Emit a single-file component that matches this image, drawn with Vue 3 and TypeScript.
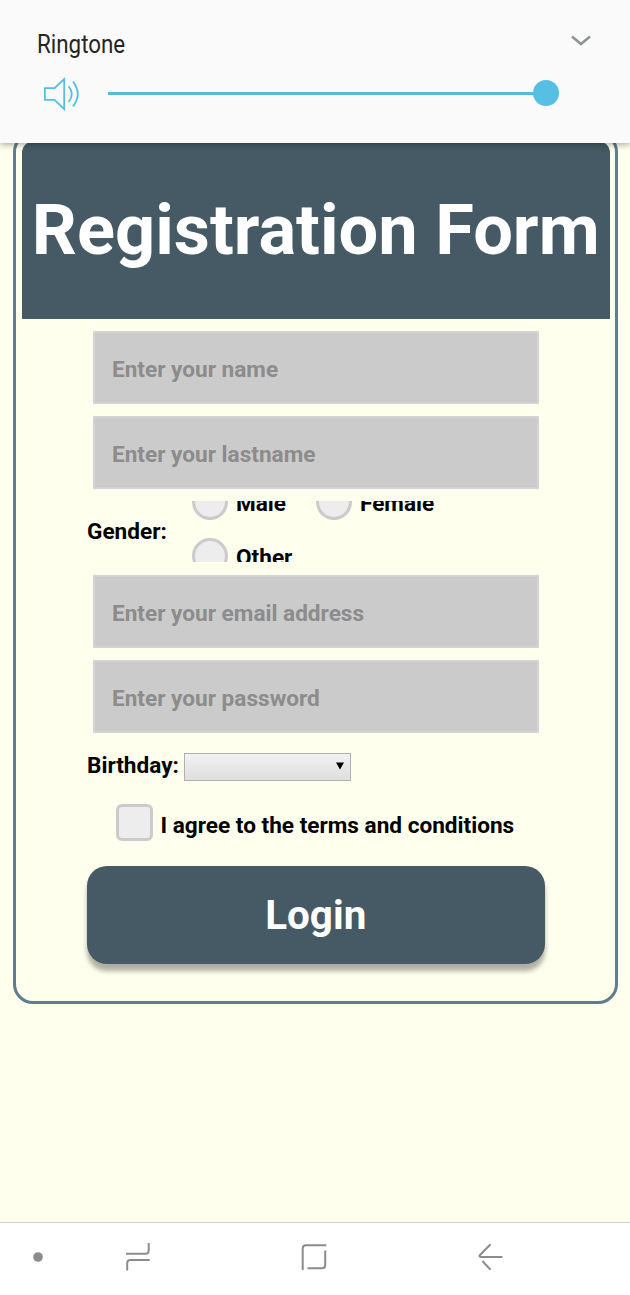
<script setup lang="ts">
import { ref } from 'vue'

interface Field {
  id: string
  type: string
  placeholder: string
}

const nameFields: Field[] = [
  { id: 'name', type: 'text', placeholder: 'Enter your name' },
  { id: 'lastname', type: 'text', placeholder: 'Enter your lastname' },
]
const accountFields: Field[] = [
  { id: 'email', type: 'email', placeholder: 'Enter your email address' },
  { id: 'password', type: 'password', placeholder: 'Enter your password' },
]
const genders: string[] = ['Male', 'Female', 'Other']
const gender = ref('')
const agreed = ref(false)
</script>

<template>
  <div class="screen">
    <section class="volume">
      <div class="volume-head">
        <span class="volume-title">Ringtone</span>
        <svg class="chevron" width="22" height="14" viewBox="0 0 22 14">
          <path d="M2 2.5 L11 10 L20 2.5" fill="none" stroke="#909494" stroke-width="2.6" />
        </svg>
      </div>
      <div class="volume-row">
        <svg class="speaker" width="38" height="36" viewBox="0 0 38 36" fill="none" stroke="#55bfe1" stroke-width="1.8">
          <path d="M1.9 12.2 H11.6 L21.2 3 V33.2 L11.6 23.8 H1.9 Z" stroke-linejoin="miter" />
          <path d="M25.6 10.2 Q32 18 25.6 26" />
          <path d="M30 5.6 Q39.6 18 30 30.4" />
        </svg>
        <div class="track"><span class="thumb"></span></div>
      </div>
    </section>

    <main class="page">
      <form class="card" @submit.prevent>
        <h1 class="title">Registration Form</h1>
        <div class="fields">
          <input v-for="f in nameFields" :key="f.id" class="field" :type="f.type" :placeholder="f.placeholder" />
          <div class="gender">
            <span class="gender-label">Gender:</span>
            <div class="options">
              <label v-for="g in genders" :key="g" class="option">
                <input v-model="gender" class="radio" type="radio" name="gender" :value="g" />
                <span class="option-text">{{ g }}</span>
              </label>
            </div>
          </div>
          <input v-for="f in accountFields" :key="f.id" class="field" :type="f.type" :placeholder="f.placeholder" />
        </div>
        <div class="birthday">
          <span class="birthday-label">Birthday:</span>
          <div class="picker">
            <svg width="8" height="8" viewBox="0 0 8 8"><path d="M0 0.5 H8 L4 7.5 Z" fill="#000" /></svg>
          </div>
        </div>
        <label class="terms">
          <input v-model="agreed" class="check" type="checkbox" />
          <span class="terms-text">I agree to the terms and conditions</span>
        </label>
        <button class="login" type="submit">Login</button>
      </form>
    </main>

    <nav class="navbar">
      <svg width="630" height="72" viewBox="0 0 630 72" fill="none" stroke="#8c8c8c" stroke-width="2">
        <circle cx="38" cy="34" r="4.8" fill="#8c8c8c" stroke="none" />
        <path d="M126 30.7 H145.5 Q148.7 30.7 148.7 27.5 V20" />
        <path d="M149.7 37 H130.5 Q127.2 37 127.2 40.2 V47.6" />
        <path d="M326.3 22.3 H306 Q302.7 22.3 302.7 25.6 V47" />
        <path d="M325.2 27.5 V42 Q325.2 45.3 322 45.3 H307.5" />
        <path d="M502.4 34 H481 Q478.6 33.7 480 32 L490.6 21.2 M482.3 38 L490.6 46.8" />
      </svg>
    </nav>
  </div>
</template>

<style>
html,
body {
  margin: 0;
  background: #ffffee;
}
</style>

<style scoped>
* {
  box-sizing: border-box;
}
.screen {
  display: flex;
  flex-direction: column;
  width: 630px;
  height: 1295px;
  overflow: hidden;
  background: #ffffee;
  font-family: Roboto, "Liberation Sans", sans-serif;
  font-weight: 700;
  color: #000;
}
.volume {
  flex: none;
  height: 142.5px;
  padding: 28px 0 0 37px;
  background: #fafafa;
  box-shadow: 0 1px 7px rgba(0, 0, 0, 0.4);
  z-index: 2;
}
.volume-head {
  display: flex;
  justify-content: space-between;
  height: 32px;
  padding-right: 38px;
}
.volume-title {
  font-size: 25px;
  font-weight: 400;
  line-height: 34px;
  color: #252525;
  transform: scaleX(0.895);
  transform-origin: 0 50%;
}
.chevron {
  margin-top: 6px;
}
.volume-row {
  display: flex;
  align-items: center;
  height: 36px;
  margin-top: 15.5px;
  padding-left: 6px;
}
.speaker {
  flex: none;
}
.track {
  display: flex;
  justify-content: flex-end;
  align-items: center;
  width: 450.5px;
  height: 3px;
  margin-left: 27px;
  margin-bottom: 0.5px;
  background: linear-gradient(to right, #55bbdc 0 430px, transparent 430px);
}
.thumb {
  flex: none;
  width: 26px;
  height: 26px;
  border-radius: 50%;
  background: #57bfe3;
}
.page {
  flex: 1;
  padding: 0 12.5px 0 13px;
}
.card {
  height: 872px;
  margin-top: -10.5px;
  padding: 6px 5px 0 6px;
  border: 3px solid #607d8b;
  border-radius: 20px;
}
.title {
  height: 177.5px;
  margin: 0;
  border-radius: 12px 12px 0 0;
  background: #455a64;
  color: #fff;
  font-size: 70.4px;
  line-height: 179px;
  text-align: center;
  white-space: nowrap;
}
.fields {
  display: flex;
  flex-direction: column;
  gap: 12px;
  padding: 12.5px 71px 0;
}
.field {
  width: 100%;
  height: 73px;
  margin: 0;
  padding: 3px 17px 0;
  border: 2px solid #d3d3d3;
  border-radius: 0;
  outline: none;
  background: #cbcbcb;
  font: 700 22.6px Roboto, sans-serif;
}
.field::placeholder {
  color: #8c8c8c;
  opacity: 1;
}
.gender {
  display: flex;
  height: 61px;
  margin: 0 0 1px -6px;
  overflow: hidden;
  font-size: 22.6px;
}
.gender-label {
  width: 105px;
  line-height: 62px;
}
.options {
  display: grid;
  grid-template-columns: 124px 130px;
  grid-auto-rows: 36px;
  row-gap: 18px;
  margin-top: -17px;
}
.option {
  display: flex;
  align-items: center;
  gap: 8px;
}
.option-text {
  margin-top: 2px;
}
.radio,
.check {
  appearance: none;
  flex: none;
  margin: 0;
  width: 37px;
  height: 37px;
  background: #ededed;
  border: 3px solid #cbcbcb;
}
.radio {
  width: 36px;
  height: 36px;
  border-radius: 50%;
}
.check {
  border-radius: 6px;
}
.birthday {
  display: flex;
  align-items: center;
  height: 28px;
  margin: 20px 0 0 65px;
  font-size: 22.6px;
}
.birthday-label {
  width: 97px;
  margin-top: -4px;
}
.picker {
  display: flex;
  align-items: center;
  justify-content: flex-end;
  width: 167px;
  height: 28px;
  padding: 0 6px 2px 0;
  border: 1px solid #b0b0b0;
  background: linear-gradient(#f2f2f2, #dedede);
}
.terms {
  display: flex;
  align-items: center;
  height: 37px;
  margin: 23px 0 0 94px;
  font-size: 22.6px;
}
.terms-text {
  margin: 5px 0 0 7.5px;
}
.login {
  display: block;
  width: 457.5px;
  height: 98px;
  margin: 25px 0 0 65px;
  padding: 0;
  border: 0;
  border-radius: 20px;
  background: #455a64;
  box-shadow: 0 7px 5px rgba(0, 0, 0, 0.32);
  color: #fff;
  font: 700 40.4px Roboto, sans-serif;
}
.navbar {
  flex: none;
  height: 73px;
  border-top: 1px solid #d0d0d0;
  background: #fff;
}
</style>
